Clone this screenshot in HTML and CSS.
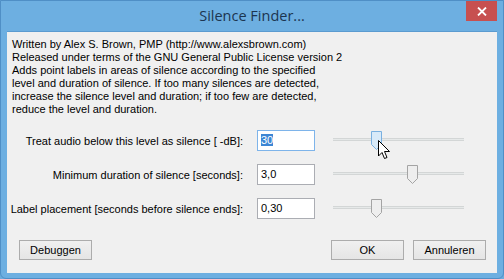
FILE: index.html
```html
<!DOCTYPE html>
<html>
<head>
<meta charset="utf-8">
<link rel="stylesheet" href="styles.css">
</head>
<body>
<div class="window">
  <div class="titlebar">
    <span></span>
    <span class="title">Silence Finder...</span>
    <span class="close-wrap"><span class="close"><svg width="10" height="9" viewBox="0 0 10 9"><path d="M1 0.5 L9 8.5 M9 0.5 L1 8.5" stroke="#fff" stroke-width="1.8"/></svg></span></span>
  </div>
  <div class="content">
    <div class="info">
      <div>Written by Alex S. Brown, PMP (http://www.alexsbrown.com)</div>
      <div>Released under terms of the GNU General Public License version 2</div>
      <div>Adds point labels in areas of silence according to the specified</div>
      <div>level and duration of silence. If too many silences are detected,</div>
      <div>increase the silence level and duration; if too few are detected,</div>
      <div>reduce the level and duration.</div>
    </div>
    <div class="form">
      <label class="lbl">Treat audio below this level as silence [ -dB]:</label>
      <div class="input focus"><span class="sel">30</span></div>
      <div class="slider">
        <div class="track"></div>
        <svg class="thumb" style="left:38px" width="12" height="20" viewBox="0 0 12 20"><path d="M0.5 0.5 H10.5 V13.5 L5.5 18.5 L0.5 13.5 Z" fill="#d8eaf9" stroke="#7ab0e0"/></svg>
        <svg class="cursor" width="13" height="20" viewBox="0 0 13 20"><path d="M0.5 0.5 L0.5 16 L4 12.5 L6.5 18.5 L9 17.5 L6.5 11.5 L11.5 11.5 Z" fill="#fff" stroke="#000" stroke-linejoin="round"/></svg>
      </div>

      <label class="lbl">Minimum duration of silence [seconds]:</label>
      <div class="input">3,0</div>
      <div class="slider">
        <div class="track"></div>
        <svg class="thumb" style="left:74px" width="12" height="20" viewBox="0 0 12 20"><path d="M0.5 0.5 H10.5 V13.5 L5.5 18.5 L0.5 13.5 Z" fill="#eeeeee" stroke="#a4a4a4"/></svg>
      </div>

      <label class="lbl">Label placement [seconds before silence ends]:</label>
      <div class="input">0,30</div>
      <div class="slider">
        <div class="track"></div>
        <svg class="thumb" style="left:38px" width="12" height="20" viewBox="0 0 12 20"><path d="M0.5 0.5 H10.5 V13.5 L5.5 18.5 L0.5 13.5 Z" fill="#eeeeee" stroke="#a4a4a4"/></svg>
      </div>
    </div>
    <div class="buttons">
      <button class="btn">Debuggen</button>
      <span class="spacer"></span>
      <button class="btn">OK</button>
      <button class="btn">Annuleren</button>
    </div>
  </div>
</div>
</body>
</html>
```
FILE: styles.css
```css
html, body {
  margin: 0;
  padding: 0;
  background: #6aabdc;
}
.window {
  width: 504px;
  height: 279px;
  box-sizing: border-box;
  background: #6dafe1;
  border: 1px solid #4f8fc6;
  border-radius: 0 0 6px 6px;
  display: flex;
  flex-direction: column;
  font-family: "Liberation Sans", Arial, sans-serif;
  font-size: 11px;
  color: #000;
}
.titlebar {
  height: 30px;
  display: grid;
  grid-template-columns: 1fr auto 1fr;
  align-items: start;
}
.title {
  font-family: "Open Sans", sans-serif;
  font-size: 14.5px;
  color: #1c3550;
  padding-top: 5px;
  line-height: 20px;
}
.close-wrap {
  display: flex;
  justify-content: flex-end;
  padding-right: 6px;
}
.close {
  width: 31px;
  height: 20px;
  background: #c75050;
  display: flex;
  align-items: center;
  justify-content: center;
}
.content {
  margin: 0 6px 5px 6px;
  flex: 1;
  background: #f0f0f0;
  border-top: 1px solid #5b9bd0;
  display: flex;
  flex-direction: column;
}
.info {
  padding: 6px 0 0 5px;
  line-height: 13px;
}
.form {
  margin-top: 14px;
  display: grid;
  grid-template-columns: 236px 58px 135px;
  grid-auto-rows: 21px;
  column-gap: 14px;
  row-gap: 13px;
  align-items: center;
}
.form .slider { margin-left: 4px; }
.lbl {
  text-align: right;
  white-space: nowrap;
}
.input {
  height: 21px;
  box-sizing: border-box;
  border: 1px solid #abadb3;
  background: #fff;
  padding: 0 0 0 3px;
  line-height: 19px;
}
.input.focus {
  border-color: #7eb4ea;
}
.sel {
  background: #3d86d4;
  color: #fff;
}
.slider {
  position: relative;
  height: 21px;
  display: flex;
  align-items: center;
}
.track {
  width: 100%;
  height: 3px;
  background: #e6e9e9;
  border-top: 1px solid #d3d6d6;
  border-bottom: 1px solid #d3d6d6;
  box-sizing: border-box;
  margin-top: -3px;
}
.thumb {
  position: absolute;
  top: 1px;
}
.cursor {
  position: absolute;
  left: 45px;
  top: 10px;
}
.buttons {
  display: flex;
  gap: 9px;
  margin-top: 21px;
  padding: 0 11px 0 12px;
}
.spacer { flex: 1; }
.btn {
  width: 73px;
  height: 20px;
  box-sizing: border-box;
  border: 1px solid #acacac;
  background: linear-gradient(#f0f0f0, #e5e5e5);
  font-family: "Liberation Sans", Arial, sans-serif;
  font-size: 11px;
  color: #000;
  padding: 0;
}
```
